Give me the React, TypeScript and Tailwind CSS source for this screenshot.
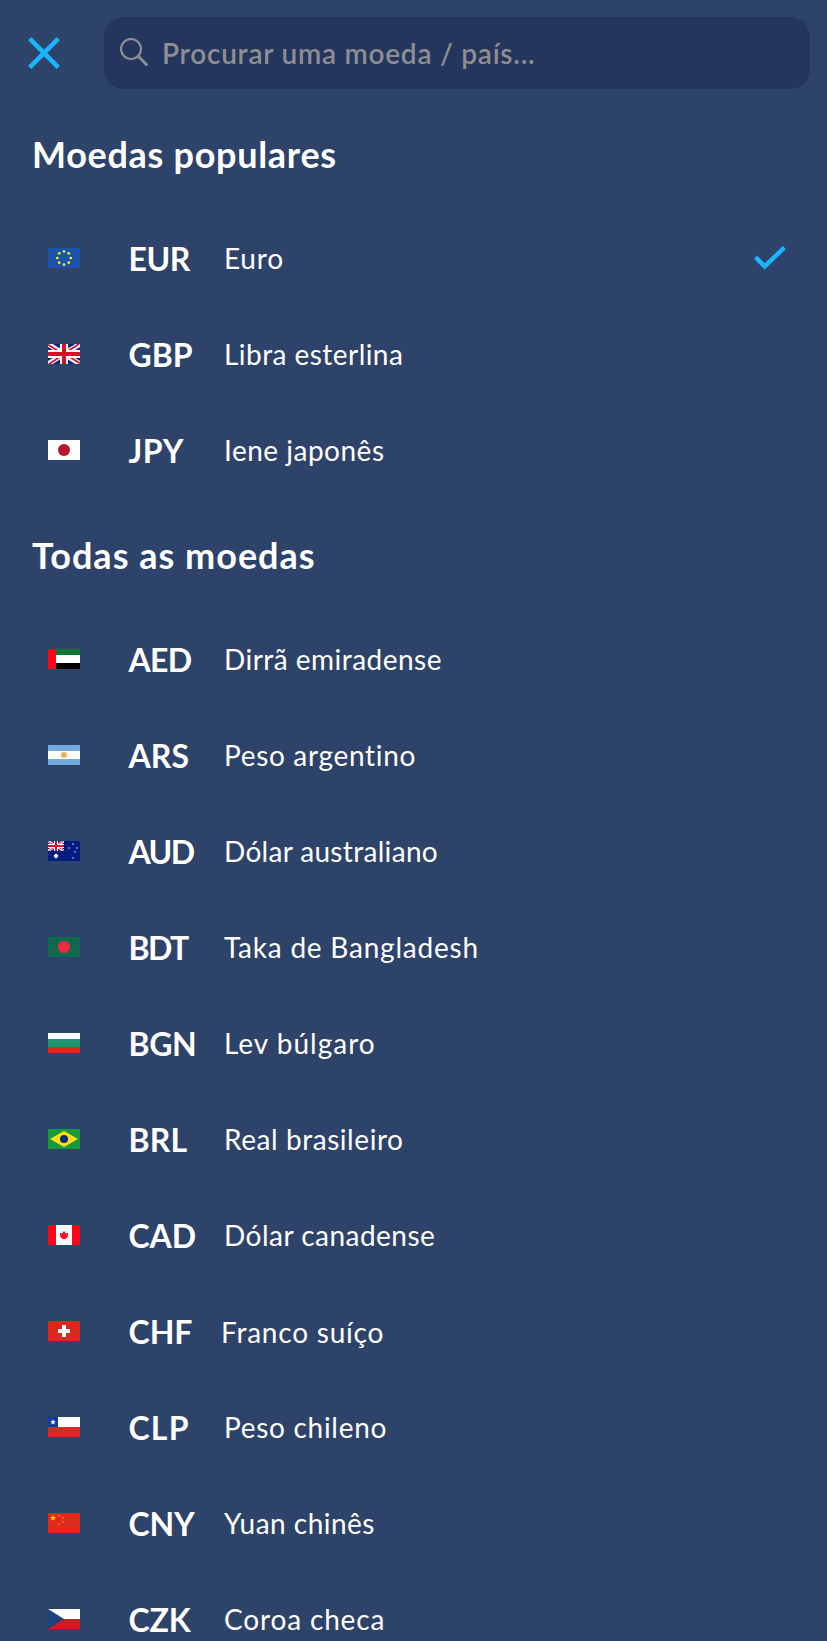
import { useState, type ReactNode } from "react";

type Currency = {
  code: string;
  name: string;
  flag: ReactNode;
  codeClass?: string;
  nameClass?: string;
};

const UNION_JACK = (
  <>
    <rect width="32" height="20" fill="#0b1f7c" />
    <path d="M0 0L32 20M32 0L0 20" stroke="#fff" strokeWidth="5" />
    <path d="M0 0.6L15 10M32 19.4L17 10M31 0L17 9M1 20L15 11" stroke="#d8142b" strokeWidth="1.8" />
    <path d="M16 0V20M0 10H32" stroke="#fff" strokeWidth="8" />
    <path d="M16 0V20M0 10H32" stroke="#d01428" strokeWidth="4" />
  </>
);

const EU_STARS = [
  [16, 3.5],
  [20.8, 5.3],
  [22.8, 10],
  [20.8, 14.7],
  [16, 16.6],
  [11.2, 14.7],
  [9.3, 10],
  [11.2, 5.3],
];

const POPULAR: Currency[] = [
  {
    code: "EUR",
    name: "Euro",
    codeClass: "tracking-[-0.4px]",
    nameClass: "tracking-[0.8px]",
    flag: (
      <>
        <rect width="32" height="20" fill="#1a52a8" />
        {EU_STARS.map(([x, y]) => (
          <circle key={`${x}-${y}`} cx={x} cy={y} r="1.35" fill="#f4f01a" />
        ))}
      </>
    ),
  },
  {
    code: "GBP",
    name: "Libra esterlina",
    nameClass: "tracking-[0.45px]",
    flag: UNION_JACK,
  },
  {
    code: "JPY",
    name: "Iene japonês",
    codeClass: "tracking-[0.6px]",
    nameClass: "tracking-[0.5px]",
    flag: (
      <>
        <rect width="32" height="20" fill="#fff" />
        <circle cx="16" cy="10" r="6" fill="#bc142c" />
      </>
    ),
  },
];

const ALL: Currency[] = [
  {
    code: "AED",
    name: "Dirrã emiradense",
    codeClass: "tracking-[-0.7px]",
    nameClass: "tracking-[0.47px]",
    flag: (
      <>
        <rect width="32" height="6" fill="#0f7432" />
        <rect y="6" width="32" height="8" fill="#fff" />
        <rect y="14" width="32" height="6" fill="#000" />
        <rect width="8" height="20" fill="#ff0418" />
      </>
    ),
  },
  {
    code: "ARS",
    name: "Peso argentino",
    codeClass: "tracking-[0.1px]",
    nameClass: "tracking-[0.67px]",
    flag: (
      <>
        <rect width="32" height="20" fill="#75aadf" />
        <rect y="6" width="32" height="8" fill="#fff" />
        <circle cx="16" cy="10" r="3.3" fill="#f3d7ae" />
        <circle cx="16" cy="10" r="2.5" fill="#e7ab50" />
      </>
    ),
  },
  {
    code: "AUD",
    name: "Dólar australiano",
    codeClass: "tracking-[-1.6px]",
    nameClass: "tracking-[0.32px]",
    flag: (
      <>
        <rect width="32" height="20" fill="#041c80" />
        <svg width="16" height="10" viewBox="0 0 32 20">
          {UNION_JACK}
        </svg>
        <circle cx="8" cy="15" r="2" fill="#fff" />
        <path d="M8 12V18M5 15H11" stroke="#fff" strokeOpacity="0.4" />
        <path
          d="M24 2h2v2h-2zM20 6h2v2h-2zM28 6h2v2h-2zM26 10h2v2h-2zM24 16h2v2h-2z"
          fill="#6474b2"
        />
      </>
    ),
  },
  {
    code: "BDT",
    name: "Taka de Bangladesh",
    codeClass: "tracking-[-1.6px]",
    nameClass: "tracking-[0.77px]",
    flag: (
      <>
        <rect width="32" height="20" fill="#126a4e" />
        <circle cx="16" cy="10" r="6" fill="#f8283f" />
      </>
    ),
  },
  {
    code: "BGN",
    name: "Lev búlgaro",
    codeClass: "tracking-[-0.4px]",
    nameClass: "tracking-[1px]",
    flag: (
      <>
        <rect width="32" height="6" fill="#fff" />
        <rect y="6" width="32" height="8" fill="#17976f" />
        <rect y="14" width="32" height="6" fill="#d72a1c" />
      </>
    ),
  },
  {
    code: "BRL",
    name: "Real brasileiro",
    codeClass: "tracking-[0.2px]",
    nameClass: "tracking-[0.56px]",
    flag: (
      <>
        <rect width="32" height="20" fill="#159b3a" />
        <path d="M2 10L16 2L30 10L16 18Z" fill="#fedf12" />
        <circle cx="16" cy="10" r="4" fill="#0a2a78" />
      </>
    ),
  },
  {
    code: "CAD",
    name: "Dólar canadense",
    codeClass: "tracking-[-0.1px]",
    nameClass: "tracking-[0.48px]",
    flag: (
      <>
        <rect width="32" height="20" fill="#ff0418" />
        <rect x="8" width="16" height="20" fill="#fff" />
        <path
          d="M16 5.800L17.500 8H19.900L20 11L18.600 13.300L16.600 14.200H15.400L13.400 13.300L12 11L12.100 8H14.500Z"
          fill="#f5142a"
        />
        <path d="M13.800 7.500v1M18.200 7.500v1" stroke="#fff" strokeWidth="0.8" />
        <path d="M16 14v2" stroke="#fbb" strokeWidth="1" />
      </>
    ),
  },
  {
    code: "CHF",
    name: "Franco suíço",
    nameClass: "-ml-[3px] pt-0.5 tracking-[0.78px]",
    flag: (
      <>
        <rect width="32" height="20" fill="#d8291c" />
        <path d="M16 4V16M10 10H22" stroke="#fff" strokeWidth="4" />
      </>
    ),
  },
  {
    code: "CLP",
    name: "Peso chileno",
    codeClass: "tracking-[1.2px]",
    nameClass: "tracking-[0.7px]",
    flag: (
      <>
        <rect width="32" height="10" fill="#fff" />
        <rect y="10" width="32" height="10" fill="#d52b22" />
        <rect width="10" height="10" fill="#1239a4" />
        <path d="M5 2.200l.8 1.900 2 .1-1.600 1.300.6 2-1.800-1.100-1.800 1.100.6-2-1.600-1.300 2-.1z" fill="#fff" />
      </>
    ),
  },
  {
    code: "CNY",
    name: "Yuan chinês",
    codeClass: "tracking-[-0.1px]",
    nameClass: "tracking-[0.47px]",
    flag: (
      <>
        <rect width="32" height="20" fill="#de2a1b" />
        <path d="M5 1.800l.8 2.200 2.300.1-1.800 1.400.6 2.100-1.900-1.200-1.900 1.200.6-2.100-1.800-1.400 2.300-.1z" fill="#ffdc0a" />
        <path d="M10 2h2v2h-2zM14 4h2v2h-2zM14 8h2v2h-2zM10 10h2v2h-2z" fill="#ea6217" />
      </>
    ),
  },
  {
    code: "CZK",
    name: "Coroa checa",
    codeClass: "tracking-[-0.1px]",
    nameClass: "tracking-[0.84px]",
    flag: (
      <>
        <rect width="32" height="10" fill="#fff" />
        <rect y="10" width="32" height="10" fill="#d8171f" />
        <path d="M0 0L16 10L0 20Z" fill="#1b447e" />
      </>
    ),
  },
];

function CurrencyRow({
  currency,
  selected,
  onSelect,
}: {
  currency: Currency;
  selected: boolean;
  onSelect: () => void;
}) {
  return (
    <button
      className="flex h-24 w-full items-center pr-[41px] pl-12 text-left"
      onClick={onSelect}
    >
      <svg width="32" height="20" viewBox="0 0 32 20" className="shrink-0">
        {currency.flag}
      </svg>
      <span
        className={`ml-12 w-24 shrink-0 pt-0.5 pl-[0.5px] text-[32px] leading-10 font-bold whitespace-nowrap ${currency.codeClass ?? ""}`}
      >
        {currency.code}
      </span>
      <span
        className={`text-[28px] leading-10 whitespace-nowrap ${currency.nameClass ?? ""}`}
      >
        {currency.name}
      </span>
      {selected && (
        <svg
          width="32"
          height="24"
          viewBox="0 0 32 24"
          fill="none"
          stroke="#19b5fe"
          strokeWidth="4.500"
          className="ml-auto shrink-0"
        >
          <path d="M1.600 11.200L10.700 20.400L30.400 1.500" />
        </svg>
      )}
    </button>
  );
}

export default function App() {
  const [selected, setSelected] = useState("EUR");
  const [query, setQuery] = useState("");

  const sections = [
    { title: "Moedas populares", items: POPULAR, titleClass: "tracking-[0.7px]" },
    { title: "Todas as moedas", items: ALL, titleClass: "tracking-[1px]" },
  ];

  function matches(c: Currency) {
    return `${c.code} ${c.name}`.toLowerCase().includes(query.toLowerCase());
  }

  return (
    <div className="h-[1641px] w-full overflow-hidden bg-[#2e4369] font-['Lato',sans-serif] text-white">
      <header className="flex h-[97px] items-start pt-[17px] pr-[17px] pl-7">
        <button className="mt-5 shrink-0" aria-label="Fechar" onClick={() => setQuery("")}>
          <svg width="32" height="32" viewBox="0 0 32 32" stroke="#19b5fe" strokeWidth="4.600">
            <path d="M1.700 1.700L30.300 30.300M30.300 1.700L1.700 30.300" />
          </svg>
        </button>
        <label className="ml-11 flex h-[72px] flex-1 items-center rounded-[20px] bg-[#24365d] pl-4">
          <svg
            width="28"
            height="28"
            viewBox="0 0 28 28"
            fill="none"
            stroke="#8e8e93"
            strokeLinecap="round"
            className="-mt-0.5 shrink-0"
          >
            <circle cx="11" cy="11" r="10" strokeWidth="2.200" />
            <path d="M18.500 18.500L26.500 26.500" strokeWidth="3" />
          </svg>
          <input
            className="ml-3.5 flex-1 bg-transparent text-[28px] font-semibold tracking-[0.75px] outline-none placeholder:text-[#8e8e93]"
            placeholder="Procurar uma moeda / país..."
            value={query}
            onChange={(e) => setQuery(e.target.value)}
          />
        </label>
      </header>

      {sections.map((section) => (
        <section key={section.title}>
          <h2
            className={`flex h-[113px] items-center pl-8 text-[36px] font-bold whitespace-nowrap ${section.titleClass}`}
          >
            {section.title}
          </h2>
          {section.items.filter(matches).map((c) => (
            <CurrencyRow
              key={c.code}
              currency={c}
              selected={selected === c.code}
              onSelect={() => setSelected(c.code)}
            />
          ))}
        </section>
      ))}
    </div>
  );
}
